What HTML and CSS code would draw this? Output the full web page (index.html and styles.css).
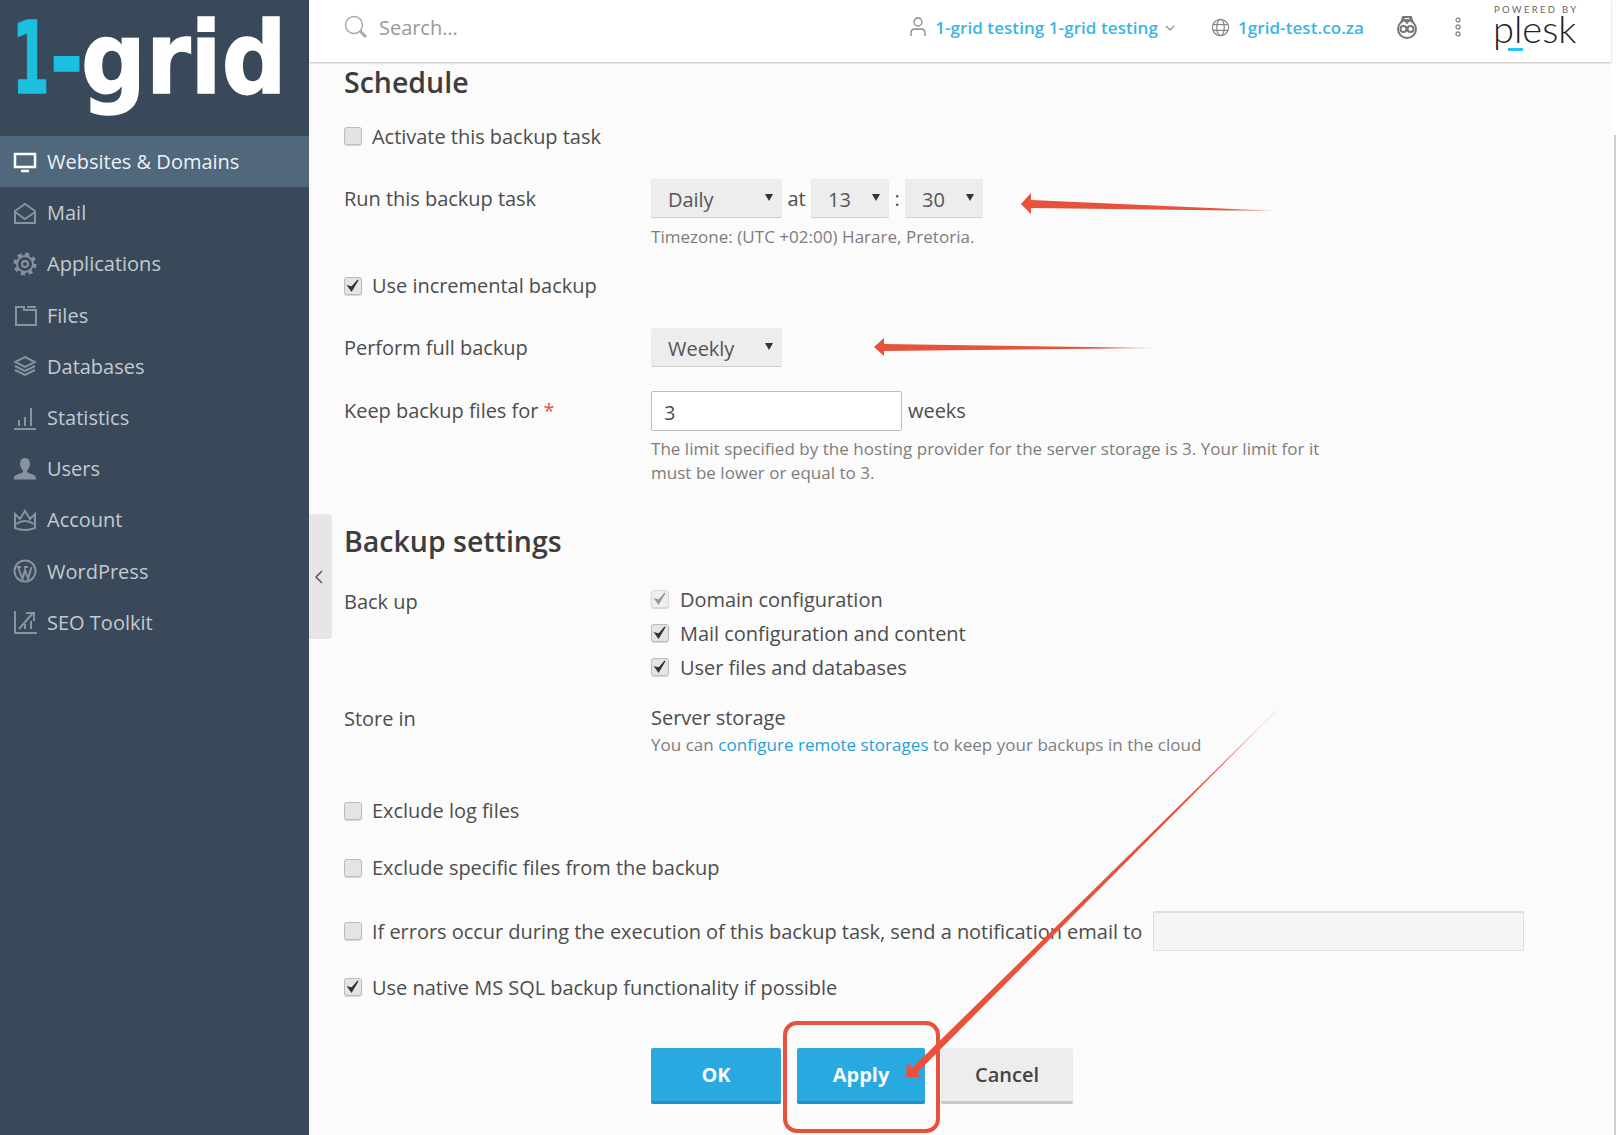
FILE: index.html
```html
<!DOCTYPE html>
<html lang="en">
<head>
<meta charset="utf-8">
<title>Backup settings</title>
<link rel="stylesheet" href="styles.css">
</head>
<body>
<div class="app">
  <aside class="sidebar">
    <div class="logo">
      <svg width="309" height="136" viewBox="0 0 309 136"><text class="logo-text logo-one" transform="translate(12 93) scale(.54 1)">1</text><text class="logo-text logo-one" transform="translate(50 93) scale(.8 1)">-</text><text class="logo-text" transform="translate(81 93) scale(.907 1)">grid</text></svg>
    </div>
    <nav class="nav">
      <a class="nav-item active"><svg class="nav-icon" viewBox="0 0 24 24"><rect x="2" y="4" width="20" height="13"/><path d="M8 21h8"/></svg><span>Websites &amp; Domains</span></a>
      <a class="nav-item"><svg class="nav-icon" viewBox="0 0 24 24"><path d="M2 10 12 3l10 7v12H2zM2 11l10 7 10-7"/></svg><span>Mail</span></a>
      <a class="nav-item"><svg class="nav-icon" viewBox="0 0 24 24"><circle cx="12" cy="12" r="8"/><circle cx="12" cy="12" r="3"/><circle class="teeth" cx="12" cy="12" r="10"/></svg><span>Applications</span></a>
      <a class="nav-item"><svg class="nav-icon" viewBox="0 0 24 24"><path d="M3 4v18h20V7H11V4zM14 4h9"/></svg><span>Files</span></a>
      <a class="nav-item"><svg class="nav-icon" viewBox="0 0 24 24"><path d="M12 3l10 5-10 5L2 8zM2 12l10 5 10-5M2 16l10 5 10-5"/></svg><span>Databases</span></a>
      <a class="nav-item"><svg class="nav-icon" viewBox="0 0 24 24"><path d="M1 23h22M6 14v6M12 11v9M18 2v18"/></svg><span>Statistics</span></a>
      <a class="nav-item"><svg class="nav-icon" viewBox="0 0 24 24"><path class="solid" d="M12 1c3.500 0 5 3 5 6 0 3-1.500 5-3 6.500v1.500c2 2 9 2 9 6.500v1H1v-1c0-4.500 7-4.500 9-6.500v-1.500C8.500 12 7 10 7 7c0-3 1.500-6 5-6z"/></svg><span>Users</span></a>
      <a class="nav-item"><svg class="nav-icon" viewBox="0 0 24 24"><path d="M2 6l5 5 5-8 5 8 5-5v14q-10 4-20 0zM3 16q9-6 18 0"/></svg><span>Account</span></a>
      <a class="nav-item"><svg class="nav-icon" viewBox="0 0 24 24"><circle cx="12" cy="12" r="10.500"/><path d="M5 8l4.500 12L12 11l3 9 3.500-12M4 8h4M11 8h4"/></svg><span>WordPress</span></a>
      <a class="nav-item"><svg class="nav-icon" viewBox="0 0 24 24"><path d="M2 1v22h22M6 19L20 3M13 3h8v8M12 19v-5M18 19v-8"/></svg><span>SEO Toolkit</span></a>
    </nav>
  </aside>
  <main class="main">
    <header class="topbar">
      <div class="search">
        <svg class="search-icon" viewBox="0 0 24 24"><circle cx="10" cy="10" r="8.500"/><path class="handle" d="M16 16l6 6"/></svg>
        <span>Search...</span>
      </div>
      <div class="top-right">
        <svg class="top-icon user-icon" viewBox="0 0 16 20"><circle cx="8" cy="5" r="4"/><path d="M1 19v-3q0-4 4-4h6q4 0 4 4v3"/></svg>
        <a class="top-link user-link">1-grid testing 1-grid testing</a>
        <svg class="chevron" viewBox="0 0 10 6"><path d="M1 1l4 4 4-4"/></svg>
        <svg class="top-icon globe-icon" viewBox="0 0 20 20"><circle cx="10" cy="10" r="8.500"/><ellipse cx="10" cy="10" rx="4" ry="8.500"/><path d="M2 7h16M2 13h16"/></svg>
        <a class="top-link domain-link">1grid-test.co.za</a>
        <svg class="top-icon bear-icon" viewBox="0 0 22 24"><path d="M5 8L7 2h8l2 6"/><circle cx="11" cy="14" r="9"/><circle cx="7.500" cy="14" r="3"/><circle cx="14.500" cy="14" r="3"/><path d="M7 3l4 5 4-5"/></svg>
        <svg class="top-icon dots-icon" viewBox="0 0 6 20"><circle cx="3" cy="3" r="2"/><circle cx="3" cy="10" r="2"/><circle cx="3" cy="17" r="2"/></svg>
        <div class="plesk">
          <span class="plesk-powered">POWERED BY</span>
          <span class="plesk-name">plesk</span>
          <span class="plesk-bar"></span>
        </div>
      </div>
    </header>
    <div class="handle-tab"><svg class="handle-arrow" viewBox="0 0 8 14"><path d="M7 1L1 7l6 6"/></svg></div>
    <form class="content">
      <h2 class="title">Schedule</h2>
      <label class="check-row gap-22"><span class="box"></span>Activate this backup task</label>
      <div class="row gap-29">
        <span class="row-label">Run this backup task</span>
        <div class="controls">
          <span class="select select-wide">Daily<i class="caret"></i></span>
          <span class="joiner">at</span>
          <span class="select select-small">13<i class="caret"></i></span>
          <span class="joiner">:</span>
          <span class="select select-small">30<i class="caret"></i></span>
        </div>
      </div>
      <p class="hint hint-row gap-7">Timezone: (UTC +02:00) Harare, Pretoria.</p>
      <label class="check-row gap-23"><span class="box checked"><svg viewBox="0 0 16 16"><path d="M3 8l3.500 5L13 2 7 9z"/></svg></span>Use incremental backup</label>
      <div class="row gap-28">
        <span class="row-label">Perform full backup</span>
        <div class="controls"><span class="select select-wide">Weekly<i class="caret"></i></span></div>
      </div>
      <div class="row gap-24">
        <span class="row-label">Keep backup files for <b class="req">*</b></span>
        <div class="controls"><span class="input">3</span><span class="unit">weeks</span></div>
      </div>
      <p class="hint hint-row gap-6">The limit specified by the hosting provider for the server storage is 3. Your limit for it<br>must be lower or equal to 3.</p>

      <h2 class="title gap-38">Backup settings</h2>
      <div class="row gap-27">
        <span class="row-label label-nudge">Back up</span>
        <div class="check-stack">
          <label class="check-row"><span class="box disabled"><svg viewBox="0 0 16 16"><path d="M3 8l3.500 5L13 2 7 9z"/></svg></span>Domain configuration</label>
          <label class="check-row"><span class="box checked"><svg viewBox="0 0 16 16"><path d="M3 8l3.500 5L13 2 7 9z"/></svg></span>Mail configuration and content</label>
          <label class="check-row"><span class="box checked"><svg viewBox="0 0 16 16"><path d="M3 8l3.500 5L13 2 7 9z"/></svg></span>User files and databases</label>
        </div>
      </div>
      <div class="row gap-22-flat">
        <span class="row-label label-nudge">Store in</span>
        <span>Server storage</span>
      </div>
      <p class="hint hint-row gap-1">You can <a class="link">configure remote storages</a> to keep your backups in the cloud</p>

      <label class="check-row gap-40"><span class="box"></span>Exclude log files</label>
      <label class="check-row gap-30"><span class="box"></span>Exclude specific files from the backup</label>
      <div class="check-row gap-30">
        <span class="box"></span>If errors occur during the execution of this backup task, send a notification email to
        <span class="input input-email"></span>
      </div>
      <label class="check-row gap-22"><span class="box checked"><svg viewBox="0 0 16 16"><path d="M3 8l3.500 5L13 2 7 9z"/></svg></span>Use native MS SQL backup functionality if possible</label>

      <div class="actions">
        <button type="button" class="btn primary btn-ok">OK</button>
        <button type="button" class="btn primary btn-apply">Apply</button>
        <button type="button" class="btn secondary">Cancel</button>
      </div>
    </form>
  </main>
  <div class="scroll-strip"><span class="scroll-thumb"></span></div>
  <div class="callout-box"></div>
  <svg class="annotations" width="1616" height="1135" viewBox="0 0 1616 1135">
    <defs>
      <linearGradient id="fade1" gradientUnits="userSpaceOnUse" x1="1021" y1="0" x2="1278" y2="0"><stop offset=".8" stop-color="#e8523c"/><stop offset="1" stop-color="#e8523c" stop-opacity=".3"/></linearGradient>
      <linearGradient id="fade2" gradientUnits="userSpaceOnUse" x1="874" y1="0" x2="1160" y2="0"><stop offset=".8" stop-color="#e8523c"/><stop offset="1" stop-color="#e8523c" stop-opacity=".3"/></linearGradient>
      <linearGradient id="fade3" gradientUnits="userSpaceOnUse" x1="906" y1="1077" x2="1286" y2="701"><stop offset=".75" stop-color="#e8523c"/><stop offset="1" stop-color="#e8523c" stop-opacity=".3"/></linearGradient>
    </defs>
    <polygon fill="url(#fade1)" points="1021,204 1031,193 1031,200 1275,211 1031,208 1031,214"/>
    <polygon fill="url(#fade2)" points="874,347 884,338 884,344 1160,348 884,351 884,356"/>
    <polygon fill="url(#fade3)" points="1287,700 916,1074 911,1069"/>
    <polygon fill="#e8523c" points="906,1077 907,1062 921,1077"/>
  </svg>
</div>
</body>
</html>
```
FILE: styles.css
```css
* { box-sizing: border-box; }
html, body { margin: 0; padding: 0; }
p { margin: 0; }
body {
  width: 1616px;
  height: 1135px;
  overflow: hidden;
  font-family: "Open Sans", "Liberation Sans", sans-serif;
  font-size: 20px;
  line-height: 27px;
  letter-spacing: -0.03px;
  color: #4d4d4d;
  background: #fff;
}
.app { position: relative; display: flex; width: 1616px; height: 1135px; overflow: hidden; }

/* Sidebar */
.sidebar { flex: 0 0 309px; background: #394959; }
.logo { height: 136px; }
.logo svg { display: block; }
.logo-text { font-family: "DejaVu Sans", sans-serif; font-weight: 700; font-size: 100px; fill: #fff; stroke: #fff; stroke-width: 1.500; }
.logo-one { fill: #1cbfe0; stroke: #1cbfe0; }
.nav { display: flex; flex-direction: column; }
.nav-item {
  display: flex;
  align-items: center;
  gap: 10px;
  height: 51.2px;
  padding-left: 13px;
  font-size: 20px;
  letter-spacing: 0;
  color: #c3cad1;
}
.nav-item.active { background: #51677b; color: #edf1f4; }
.nav-icon { width: 24px; height: 24px; flex: none; fill: none; stroke: #87939f; stroke-width: 2; }
.active .nav-icon { stroke: #fff; stroke-width: 2.500; }
.nav-icon .solid { fill: #87939f; stroke: none; }
.nav-icon .teeth { stroke-width: 3; stroke-dasharray: 4 3.850; }

/* Main */
.main { position: relative; flex: 0 0 1302px; display: flex; flex-direction: column; background: #fbfbfb; }
.topbar {
  display: flex;
  align-items: center;
  justify-content: space-between;
  height: 62px;
  flex: none;
  padding: 0 33px 8px 35px;
  background: #fff;
  box-shadow: 0 1px 2px rgba(0, 0, 0, .25);
  position: relative;
  z-index: 1;
}
.search { display: flex; align-items: center; gap: 11px; color: #999; }
.search-icon { width: 24px; height: 24px; fill: none; stroke: #aaa; stroke-width: 1.500; }
.search-icon .handle { stroke-width: 3; }
.top-right { display: flex; align-items: center; }
.top-icon { fill: none; stroke: #888; stroke-width: 1.300; flex: none; }
.user-icon { width: 16px; height: 20px; margin-right: 9px; }
.top-link { font-size: 17px; font-weight: 600; letter-spacing: 0.07px; color: #3bb5e6; }
.chevron { width: 10px; height: 6px; margin: 2px 36px 0 7px; fill: none; stroke: #888; stroke-width: 1.200; }
.globe-icon { width: 19px; height: 19px; margin-right: 8px; }
.bear-icon { width: 22px; height: 24px; margin-left: 32px; stroke: #777; stroke-width: 2; }
.dots-icon { width: 6px; height: 20px; margin: 0 32px 0 37px; }
.plesk { position: relative; display: flex; flex-direction: column; width: 85px; height: 54px; }
.plesk-powered { margin: 4px 0 0 1px; font-size: 9.500px; line-height: 12px; letter-spacing: 2.300px; color: #666; white-space: nowrap; font-family: "Lato", sans-serif; }
.plesk-name { font-family: "Lato", sans-serif; font-weight: 300; font-size: 38px; line-height: 30px; letter-spacing: 0; color: #222; margin-top: -3px; }
.plesk-bar { position: absolute; left: 15px; top: 48px; width: 15px; height: 3px; background: #2cc0ee; }

.handle-tab {
  position: absolute;
  left: 0;
  top: 514px;
  width: 23px;
  height: 125px;
  display: flex;
  align-items: center;
  justify-content: center;
  padding-right: 3px;
  background: #e6e6e6;
  border-radius: 0 4px 4px 0;
}
.handle-arrow { width: 8px; height: 14px; margin-top: 0; fill: none; stroke: #555; stroke-width: 1.500; }

/* Form */
.content { padding: 2px 0 0 35px; }
.title { margin: 0; font-size: 28.500px; line-height: 36px; font-weight: 600; letter-spacing: 0; color: #3d3d3d; }
.gap-1 { margin-top: 1.500px; }
.gap-6 { margin-top: 6px; }
.gap-7 { margin-top: 7px; }
.gap-22 { margin-top: 22.500px; }
.gap-22-flat { margin-top: 22px; }
.gap-23 { margin-top: 23px; }
.gap-24 { margin-top: 24px; }
.gap-27 { margin-top: 27px; }
.gap-28 { margin-top: 28.500px; }
.gap-29 { margin-top: 29.500px; }
.gap-30 { margin-top: 30px; }
.gap-38 { margin-top: 38px; }
.gap-40 { margin-top: 40px; }
.row { display: grid; grid-template-columns: 307px 1fr; align-items: center; }
.row-label { align-self: center; }
.label-nudge { align-self: start; margin-top: 2px; }
.controls { display: flex; align-items: center; }
.select {
  position: relative;
  display: block;
  height: 39px;
  line-height: 42px;
  padding-left: 17px;
  background: #ededed;
  border-bottom: 1px solid #cfcfcf;
  border-radius: 2px;
  color: #555;
}
.select-wide { width: 131px; }
.select-small { width: 78px; }
.caret {
  position: absolute;
  right: 9px;
  top: 15px;
  border-left: 4.500px solid transparent;
  border-right: 4.500px solid transparent;
  border-top: 7px solid #333;
}
.joiner { width: 29px; text-align: center; }
.joiner + .select + .joiner { width: 16px; }
.input {
  display: block;
  width: 251px;
  height: 40px;
  line-height: 42px;
  padding-left: 12px;
  background: #fff;
  border: 1px solid #bdbdbd;
  border-radius: 2px;
}
.unit { margin-left: 6px; }
.req { color: #e8523c; font-weight: 400; }
.hint { font-size: 17px; line-height: 24px; letter-spacing: 0.03px; color: #7d7d7d; }
.hint-row { padding-left: 307px; }
.link { color: #2a9fd0; }
.check-row { display: flex; align-items: center; gap: 10px; white-space: nowrap; }
.check-stack { display: flex; flex-direction: column; gap: 7px; }
.check-stack .check-row { gap: 11px; }
.box {
  flex: none;
  display: block;
  width: 18px;
  height: 18px;
  background: #e4e4e4;
  border: 1px solid #bcbcbc;
  border-radius: 3px;
  box-shadow: 0 1px 1px rgba(0, 0, 0, .15);
}
.box svg { display: block; width: 16px; height: 16px; fill: #333; stroke: #333; stroke-width: 1.200; }
.box.disabled { border-color: #d8d8d8; background: #efefef; }
.box.disabled svg { fill: #999; stroke: #999; }
.input-email { width: 371px; padding: 0; margin-left: 1px; background: #f5f5f5; border-color: #dedede; border-top-width: 2px; height: 40px; }
.actions { display: flex; gap: 16px; margin: 47px 0 0 307px; }
.btn {
  height: 56px;
  padding: 0;
  border: 0;
  border-radius: 2px;
  font-family: inherit;
  font-size: 20px;
  font-weight: 700;
}
.btn.primary { background: #29a9e0; border-bottom: 3px solid #2190bf; color: #f3fbff; }
.btn-ok { width: 130px; }
.btn-apply { width: 128px; }
.btn.secondary { width: 132px; background: #ededed; border-bottom: 3px solid #c9c9c9; color: #444; font-weight: 600; }

/* Right strip */
.scroll-strip { flex: 1; position: relative; background: #fff; }
.scroll-thumb { position: absolute; right: 0; top: 135px; width: 2px; height: 1000px; background: #cfcfcf; }

/* Annotations */
.callout-box { position: absolute; left: 783px; top: 1021px; width: 157px; height: 112px; border: 4px solid #e8523c; border-radius: 14px; }
.annotations { position: absolute; left: 0; top: 0; pointer-events: none; }
```
